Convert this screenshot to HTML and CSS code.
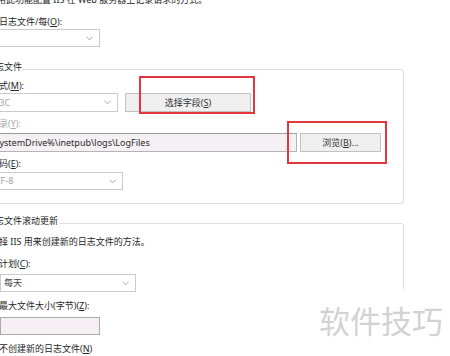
FILE: index.html
```html
<!DOCTYPE html>
<html lang="zh-CN">
<head>
    <meta charset="UTF-8">
    <title>日志</title>
    <link rel="stylesheet" href="styles.css">
</head>
<body>

    <div class="page">
        <p class="intro">使用此功能配置 IIS 在 Web 服务器上记录请求的方式。</p>

        <div class="label top-label">一个日志文件/每(<u>O</u>):</div>
        <div class="select select-site">
            <span></span>
            <svg class="chev" viewBox="0 0 8 5"><path d="M0.5 0.5 L4 4 L7.5 0.5"/></svg>
        </div>

        <!-- 日志文件 -->
        <fieldset class="group group-file">
            <legend>日志文件</legend>
            <div class="group-body">
                <div class="label label-format">格式(<u>M</u>):</div>
                <div class="row row-format">
                    <div class="select select-format muted">
                        <span>W3C</span>
                        <svg class="chev" viewBox="0 0 8 5"><path d="M0.5 0.5 L4 4 L7.5 0.5"/></svg>
                    </div>
                    <div class="btn btn-fields">选择字段(<u>S</u>)</div>
                </div>

                <div class="label label-dir faded">目录(<u>Y</u>):</div>
                <div class="row row-dir">
                    <div class="textbox textbox-path">%SystemDrive%\inetpub\logs\LogFiles</div>
                    <div class="btn btn-browse">浏览(<u>B</u>)...</div>
                </div>

                <div class="label label-enc">编码(<u>E</u>):</div>
                <div class="select select-enc muted">
                    <span>UTF-8</span>
                    <svg class="chev" viewBox="0 0 8 5"><path d="M0.5 0.5 L4 4 L7.5 0.5"/></svg>
                </div>
            </div>
        </fieldset>

        <!-- 日志文件滚动更新 -->
        <fieldset class="group group-roll">
            <legend>日志文件滚动更新</legend>
            <div class="group-body">
                <div class="label desc">选择 IIS 用来创建新的日志文件的方法。</div>

                <div class="radio-row radio-plan"><span class="radio"></span>计划(<u>C</u>):</div>
                <div class="sub">
                    <div class="select select-plan">
                        <span>每天</span>
                        <svg class="chev" viewBox="0 0 8 5"><path d="M0.5 0.5 L4 4 L7.5 0.5"/></svg>
                    </div>
                </div>

                <div class="radio-row radio-size"><span class="radio"></span>最大文件大小(字节)(<u>Z</u>):</div>
                <div class="sub">
                    <div class="textbox textbox-size"></div>
                </div>

                <div class="radio-row radio-none"><span class="radio"></span>不创建新的日志文件(<u>N</u>)</div>
            </div>
        </fieldset>
    </div>

    <!-- annotations over the screenshot -->
    <div class="mark-box mark-fields"></div>
    <div class="mark-box mark-browse"></div>
    <div class="watermark"><span>软件技巧</span></div>

</body>
</html>
```

FILE: styles.css
```css
html,
body {
    margin: 0;
    height: 100%;
    overflow: hidden;
}

body {
    position: relative;
    background: #fff;
    font-family: "Noto Sans", "Noto Sans CJK SC", sans-serif;
    font-size: 9px;
    color: #262626;
    width: 450px;
    height: 356px;
}

u {
    text-decoration: underline;
    text-underline-offset: 1px;
}

.page {
    margin-left: -20px;
    width: 460px;
}

.intro {
    margin: -6px 0 0 8px;
    line-height: 12px;
    white-space: nowrap;
}

.label {
    line-height: 12px;
    white-space: nowrap;
}

.top-label {
    margin: 10px 0 0 1px;
}

/* dropdowns */
.select {
    box-sizing: border-box;
    height: 18px;
    border: 1px solid #cbcbcb;
    background: #fff;
    display: flex;
    align-items: center;
    justify-content: space-between;
    padding: 0 6px 0 3px;
    line-height: 12px;
}

.select .chev {
    width: 7px;
    height: 5px;
    fill: none;
    stroke: #9a9a9a;
    stroke-width: 1;
}

.muted {
    color: #a2a2a2;
}

.faded {
    color: #a8a8a8;
}

.select-site {
    margin-top: 1px;
    width: 120px;
}

/* group boxes */
.group {
    margin: 14px 0 0 0;
    padding: 0;
    width: 424px;
    box-sizing: border-box;
    border: 1px solid #dedede;
    border-radius: 3px;
}

.group legend {
    margin-left: 4px;
    padding: 0 1px 4px 1px;
    line-height: 12px;
    white-space: nowrap;
}

.group-body {
    padding-left: 9px;
}

.group-file .group-body {
    padding-bottom: 13px;
}

.label-format {
    margin-top: 3px;
}

.row {
    display: flex;
    align-items: center;
}

.row-format {
    margin-top: 1px;
    gap: 7px;
}

.select-format {
    width: 128px;
    height: 19px;
    padding-left: 0;
}

.btn {
    box-sizing: border-box;
    height: 19px;
    border: 1px solid #c2c2c2;
    background: #efefef;
    color: #303030;
    display: flex;
    align-items: center;
    justify-content: center;
    line-height: 12px;
}

.btn-fields {
    width: 126px;
}

.label-dir {
    margin-top: 6px;
}

.row-dir {
    margin-top: 3px;
    gap: 3px;
}

.textbox {
    box-sizing: border-box;
    height: 19px;
    border: 1px solid #b4b4b4;
    border-top-color: #9c9c9c;
    background: #f4f0f3;
    padding: 0 3px;
    line-height: 17px;
    white-space: nowrap;
    color: #2a2a2a;
}

.textbox-path {
    width: 307px;
    padding-left: 0;
    text-indent: -4px;
    overflow: hidden;
}

.btn-browse {
    width: 81px;
}

.label-enc {
    margin-top: 6px;
}

.select-enc {
    margin-top: 2px;
    width: 133px;
    padding-left: 0;
}

.select-enc span {
    margin-left: -2px;
}

.group-roll {
    margin-top: 11px;
    height: 200px;
}

.desc {
    margin-top: 5px;
}

.radio-row {
    display: flex;
    align-items: center;
    line-height: 12px;
    white-space: nowrap;
}

.radio {
    box-sizing: border-box;
    width: 10px;
    height: 10px;
    margin: 0 1px 0 -2px;
    border: 1px solid #333;
    border-radius: 50%;
    flex: none;
}

.radio-plan {
    margin-top: 10px;
}

.radio-size,
.radio-none {
    margin-top: 8px;
}

.sub {
    padding-left: 10px;
}

.select-plan {
    margin-top: 4px;
    width: 136px;
    color: #444;
}

.textbox-size {
    margin-top: 5px;
    width: 100px;
    height: 18px;
    background: #f6eff4;
    border-color: #aaa;
}

/* red highlight boxes */
.mark-box {
    position: absolute;
    box-sizing: border-box;
    border: 2px solid #e2383d;
}

.mark-fields {
    left: 139px;
    top: 76px;
    width: 116px;
    height: 38px;
}

.mark-browse {
    left: 287px;
    top: 121px;
    width: 100px;
    height: 43px;
}

.watermark {
    position: absolute;
    left: 300px;
    top: 289px;
    width: 150px;
    height: 67px;
    background: #fff;
}

.watermark span {
    position: absolute;
    left: 19px;
    top: 13px;
    font-family: "Noto Sans CJK SC", sans-serif;
    font-size: 31px;
    line-height: 36px;
    color: #d2d2d2;
    white-space: nowrap;
}
```
